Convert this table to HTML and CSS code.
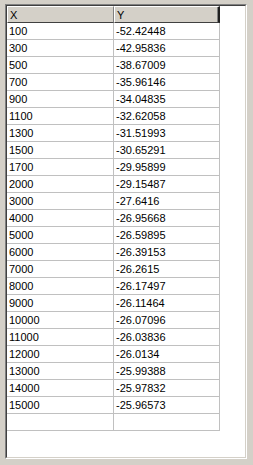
FILE: index.html
```html
<!DOCTYPE html>
<html>
<head>
<meta charset="utf-8">
<link rel="stylesheet" href="styles.css">
</head>
<body>
<div class="frame">
  <div class="view">
    <div class="grid">
      <div class="hd">X</div><div class="hd hd-last">Y</div>
      <div class="c">100</div><div class="c">-52.42448</div>
      <div class="c">300</div><div class="c">-42.95836</div>
      <div class="c">500</div><div class="c">-38.67009</div>
      <div class="c">700</div><div class="c">-35.96146</div>
      <div class="c">900</div><div class="c">-34.04835</div>
      <div class="c">1100</div><div class="c">-32.62058</div>
      <div class="c">1300</div><div class="c">-31.51993</div>
      <div class="c">1500</div><div class="c">-30.65291</div>
      <div class="c">1700</div><div class="c">-29.95899</div>
      <div class="c">2000</div><div class="c">-29.15487</div>
      <div class="c">3000</div><div class="c">-27.6416</div>
      <div class="c">4000</div><div class="c">-26.95668</div>
      <div class="c">5000</div><div class="c">-26.59895</div>
      <div class="c">6000</div><div class="c">-26.39153</div>
      <div class="c">7000</div><div class="c">-26.2615</div>
      <div class="c">8000</div><div class="c">-26.17497</div>
      <div class="c">9000</div><div class="c">-26.11464</div>
      <div class="c">10000</div><div class="c">-26.07096</div>
      <div class="c">11000</div><div class="c">-26.03836</div>
      <div class="c">12000</div><div class="c">-26.0134</div>
      <div class="c">13000</div><div class="c">-25.99388</div>
      <div class="c">14000</div><div class="c">-25.97832</div>
      <div class="c">15000</div><div class="c">-25.96573</div>
      <div class="c"></div><div class="c"></div>
    </div>
  </div>
</div>
</body>
</html>
```
FILE: styles.css
```css
html, body {
  margin: 0;
  padding: 0;
  background: #d4d0c8;
}
body {
  width: 253px;
  height: 465px;
  padding: 4px 0 0 5px;
  box-sizing: border-box;
  font-family: "Liberation Sans", Arial, sans-serif;
  font-size: 11px;
  color: #000;
}
.frame {
  width: 242px;
  height: 455px;
  box-sizing: border-box;
  border-style: solid;
  border-width: 1px;
  border-color: #808080 #ffffff #ffffff #808080;
}
.view {
  height: 100%;
  box-sizing: border-box;
  border-style: solid;
  border-width: 1px;
  border-color: #404040 #d4d0c8 #d4d0c8 #404040;
  background: #ffffff;
}
.grid {
  display: grid;
  grid-template-columns: 107px 106px;
  grid-template-rows: 17px;
  grid-auto-rows: 17px;
  width: 213px;
}
.hd {
  background: #d4d0c8;
  box-sizing: border-box;
  border-top: 1px solid #ffffff;
  border-left: 1px solid #ffffff;
  border-right: 1px solid #808080;
  border-bottom: 1px solid #404040;
  padding: 1px 0 0 2px;
  display: flex;
  align-items: center;
  line-height: 1;
}
.hd-last {
  border-right: 2px solid #202020;
  box-shadow: inset -1px 0 0 #808080;
}
.c {
  box-sizing: border-box;
  border-right: 1px solid #c0c0c0;
  border-bottom: 1px solid #c0c0c0;
  padding: 1px 0 0 2px;
  display: flex;
  align-items: center;
  line-height: 1;
  white-space: nowrap;
}
```
